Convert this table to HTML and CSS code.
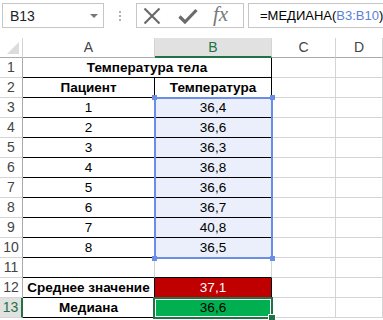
FILE: index.html
```html
<!DOCTYPE html>
<html>
<head>
<meta charset="utf-8">
<link rel="stylesheet" href="styles.css">
</head>
<body>
<div class="toolbar">
  <div class="namebox"><span>B13</span><span class="arrow"></span></div>
  <div class="dots"><i></i><i></i><i></i></div>
  <div class="buttons">
    <svg class="ico-x" width="18" height="18" viewBox="0 0 18 18"><path d="M1.5 1.5 L16.5 16.5 M16.5 1.5 L1.5 16.5" stroke="#6b6b6b" stroke-width="2.2" fill="none"/></svg>
    <svg class="ico-ok" width="20" height="18" viewBox="0 0 20 18"><path d="M1.5 9.5 L7 15 L18.5 3" stroke="#6b6b6b" stroke-width="3.2" fill="none"/></svg>
    <span class="fx">fx</span>
  </div>
  <div class="formula">=МЕДИАНА(<span class="ref">B3:B10</span>)</div>
</div>
<div class="sheet">
  <div class="grid">
    <div class="corner"><span class="tri"></span></div>
    <div class="ch">A</div>
    <div class="ch sel">B</div>
    <div class="ch">C</div>
    <div class="ch">D</div>

    <div class="rh">1</div>
    <div class="c merged b bb br">Температура тела</div>
    <div class="c"></div><div class="c"></div>

    <div class="rh">2</div>
    <div class="c b bb br">Пациент</div>
    <div class="c b bb br">Температура</div>
    <div class="c"></div><div class="c"></div>

    <div class="rh">3</div><div class="c bb br">1</div><div class="c bb br blue">36,4</div><div class="c"></div><div class="c"></div>
    <div class="rh">4</div><div class="c bb br">2</div><div class="c bb br blue">36,6</div><div class="c"></div><div class="c"></div>
    <div class="rh">5</div><div class="c bb br">3</div><div class="c bb br blue">36,3</div><div class="c"></div><div class="c"></div>
    <div class="rh">6</div><div class="c bb br">4</div><div class="c bb br blue">36,8</div><div class="c"></div><div class="c"></div>
    <div class="rh">7</div><div class="c bb br">5</div><div class="c bb br blue">36,6</div><div class="c"></div><div class="c"></div>
    <div class="rh">8</div><div class="c bb br">6</div><div class="c bb br blue">36,7</div><div class="c"></div><div class="c"></div>
    <div class="rh">9</div><div class="c bb br">7</div><div class="c bb br blue">40,8</div><div class="c"></div><div class="c"></div>
    <div class="rh">10</div><div class="c bb br">8</div><div class="c bb br blue">36,5</div><div class="c"></div><div class="c"></div>

    <div class="rh">11</div><div class="c bb"></div><div class="c bb"></div><div class="c"></div><div class="c"></div>

    <div class="rh">12</div><div class="c b bb br">Среднее значение</div><div class="c bb br red">37,1</div><div class="c"></div><div class="c"></div>
    <div class="rh act">13</div><div class="c b bb br">Медиана</div><div class="c bb br green">36,6</div><div class="c"></div><div class="c"></div>
  </div>
  <div class="selection"><i class="h tl"></i><i class="h tr"></i><i class="h bl"></i><i class="h brc"></i></div>
  <div class="active"><i class="fill"></i></div>
</div>
</body>
</html>
```
FILE: styles.css
```css
* { box-sizing: border-box; }
body {
  margin: 0;
  width: 383px;
  height: 320px;
  overflow: hidden;
  background: #fff;
  font-family: "Liberation Sans", Arial, sans-serif;
  font-size: 13.5px;
  color: #000;
}
.toolbar {
  height: 38px;
  display: flex;
  align-items: flex-start;
  padding-top: 3px;
  padding-left: 2px;
}
.namebox {
  flex: 0 0 auto;
  width: 102px;
  height: 25px;
  border: 1px solid #c6c6c6;
  display: flex;
  align-items: center;
  justify-content: space-between;
  padding: 0 5px 0 7px;
  font-size: 14px;
  color: #222;
}
.arrow {
  width: 0; height: 0;
  border-left: 4px solid transparent;
  border-right: 4px solid transparent;
  border-top: 4px solid #777;
}
.dots {
  flex: 0 0 auto;
  width: 32px;
  height: 25px;
  display: flex;
  flex-direction: column;
  align-items: center;
  justify-content: center;
  gap: 2px;
}
.dots i { width: 2px; height: 2px; background: #b0b0b0; display: block; }
.buttons {
  flex: 0 0 auto;
  width: 108px;
  height: 25px;
  border: 1px solid #c6c6c6;
  display: flex;
  align-items: center;
  padding-left: 6px;
}
.ico-x { margin-right: 17px; flex: 0 0 auto; }
.ico-ok { margin-right: 15px; flex: 0 0 auto; }
.fx {
  font-family: "Liberation Serif", serif;
  font-style: italic;
  font-size: 21px;
  color: #7a7a7a;
  margin-top: -3px;
}
.formula {
  margin-left: 4px;
  flex: 1 1 auto;
  min-width: 0;
  overflow: hidden;
  height: 25px;
  border: 1px solid #c6c6c6;
  border-right: none;
  padding-left: 11px;
  font-size: 13px;
  line-height: 23px;
  color: #000;
  white-space: nowrap;
}
.ref { color: #5b80d8; }
.sheet { position: relative; }
.grid {
  display: grid;
  grid-template-columns: 23px 132px 117px 64px 47px;
  grid-auto-rows: 20px;
}
.corner {
  background: #fff;
  border-right: 1px solid #d4d4d4;
  border-bottom: 1px solid #ababab;
  position: relative;
}
.tri {
  position: absolute;
  right: 3px; bottom: 3px;
  width: 0; height: 0;
  border-left: 12px solid transparent;
  border-bottom: 12px solid #dcdcdc;
}
.ch {
  background: #fff;
  border-right: 1px solid #d4d4d4;
  border-bottom: 1px solid #ababab;
  text-align: center;
  line-height: 19px;
  color: #444;
  font-size: 14px;
}
.ch.sel {
  background: #e1e1e1;
  color: #217346;
  border-bottom: 2px solid #217346;
}
.rh {
  border-right: 1px solid #ababab;
  border-bottom: 1px solid #d4d4d4;
  text-align: center;
  line-height: 19px;
  color: #444;
  font-size: 14px;
}
.rh.act {
  background: #e1e1e1;
  color: #217346;
  border-right: 2px solid #217346;
}
.c {
  border-right: 1px solid #d4d4d4;
  border-bottom: 1px solid #d4d4d4;
  text-align: center;
  line-height: 19px;
  white-space: nowrap;
}
.merged { grid-column: span 2; }
.b { font-weight: bold; }
.bb { border-bottom-color: #000; }
.br { border-right-color: #000; }
.blue { background: #eaeffb; }
.red { background: #c00000; color: #fff; }
.green { background: #00b050; }
.selection {
  position: absolute;
  left: 154px;
  top: 59px;
  width: 119px;
  height: 162px;
  border: 2px solid #6a8ee6;
}
.h {
  position: absolute;
  width: 5px; height: 5px;
  background: #6a8ee6;
  display: block;
}
.tl { left: -4px; top: -4px; }
.tr { right: -4px; top: -4px; }
.bl { left: -4px; bottom: -4px; }
.brc { right: -4px; bottom: -4px; }
.active {
  position: absolute;
  left: 153px;
  top: 259px;
  width: 120px;
  height: 22px;
  border: 2px solid #217346;
}
.fill {
  display: block;
  width: 100%; height: 100%;
  border: 1px solid #fff;
}
.active::after {
  content: "";
  position: absolute;
  right: -5px; bottom: -5px;
  width: 6px; height: 6px;
  background: #217346;
  border: 1px solid #fff;
}
```
